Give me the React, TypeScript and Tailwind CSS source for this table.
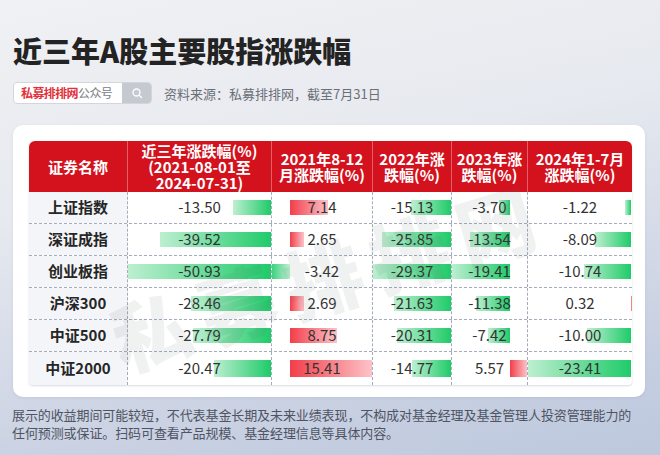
import React from "react";

type Row = [string, number, number, number, number, number];

const rows: Row[] = [
  ["上证指数", -13.5, 7.14, -15.13, -3.7, -1.22],
  ["深证成指", -39.52, 2.65, -25.85, -13.54, -8.09],
  ["创业板指", -50.93, -3.42, -29.37, -19.41, -10.74],
  ["沪深300", -28.46, 2.69, -21.63, -11.38, 0.32],
  ["中证500", -27.79, 8.75, -20.31, -7.42, -10.0],
  ["中证2000", -20.47, 15.41, -14.77, 5.57, -23.41],
];

const headers: string[][] = [
  ["证券名称"],
  ["近三年涨跌幅(%)", "(2021-08-01至", "2024-07-31)"],
  ["2021年8-12", "月涨跌幅(%)"],
  ["2022年涨", "跌幅(%)"],
  ["2023年涨", "跌幅(%)"],
  ["2024年1-7月", "涨跌幅(%)"],
];

const colStats = [1, 2, 3, 4, 5].map((c) => {
  const vals = rows.map((r) => r[c] as number);
  const mn = Math.min(0, ...vals);
  const mx = Math.max(0, ...vals);
  const span = mx - mn;
  return { span, axis: -mn / span };
});

function Bar({ v, col }: { v: number; col: number }) {
  const { span, axis } = colStats[col - 1];
  const w = (Math.abs(v) / span) * 100;
  const left = v < 0 ? (axis - Math.abs(v) / span) * 100 : axis * 100;
  let bg: string;
  if (v >= 0) {
    bg = "linear-gradient(to right, #f23e4a, #fcc3c8)";
  } else if (col === 2) {
    bg = "linear-gradient(to right, #3fd07f, #bff0d2)";
  } else {
    bg = "linear-gradient(to right, #bdefd0, #1fcb69)";
  }
  return (
    <div
      className="absolute top-[8px] bottom-[8px]"
      style={{ left: `${left}%`, width: `${w}%`, background: bg }}
    />
  );
}

function fmt(v: number) {
  return v.toFixed(2);
}

export default function App() {
  return (
    <div
      className="relative w-[660px] h-[455px] overflow-hidden bg-[linear-gradient(168deg,#f0f1f4_0%,#e6e9ef_38%,#c8d0e2_80%,#bdc8dd_100%)]"
      style={{ fontFamily: '"Noto Sans CJK SC", "Noto Sans", sans-serif' }}
    >
      <div className="pl-[13px] pt-[31px]">
        <h1 className="text-[29px] leading-[38px] font-black text-[#232323]">
          近三年A股主要股指涨跌幅
        </h1>
        <div className="mt-[13px] flex items-center h-[22px]">
          <div className="flex h-[22px] w-[139px] rounded-[4px] overflow-hidden border border-[#d3d6dc] bg-white">
            <div className="flex-1 flex items-center pl-[7px] text-[12px] tracking-[-0.6px] leading-none">
              <span className="text-[#e2313c] font-bold">私募排排网</span>
              <span className="text-[#777b84]">公众号</span>
            </div>
            <div className="w-[29px] h-full bg-[#c5c9d0] flex items-center justify-center">
              <svg width="12" height="12" viewBox="0 0 24 24" fill="none" stroke="white" strokeWidth="2.6" strokeLinecap="round">
                <circle cx="11" cy="11" r="7" />
                <path d="M16.5 16.5L21 21" />
              </svg>
            </div>
          </div>
          <div className="ml-[12px] text-[13px] text-[#6b6f78] leading-none">资料来源：私募排排网，截至7月31日</div>
        </div>
      </div>

      <div className="relative ml-[13px] mt-[21px] w-[632px] h-[272px] bg-white rounded-[10px] pl-[16px] pt-[16px] shadow-[0_1px_3px_rgba(120,130,160,0.15)]">
        <div className="w-[603px] rounded-t-[6px] rounded-b-[4px] shadow-[0_1px_2px_rgba(100,110,140,0.25)] overflow-hidden">
          <div className="grid grid-cols-[99px_144px_101px_79px_76px_104px] h-[51px] bg-[#d3121e] text-white font-bold text-[15px] leading-[16px]">
            {headers.map((h, i) => (
              <div
                key={i}
                className={`flex flex-col items-center justify-center text-center ${i < 5 ? "border-r border-[#e2606a]" : ""}`}
              >
                {h.map((l, j) => (
                  <div key={j} className="leading-[16px]">{l}</div>
                ))}
              </div>
            ))}
          </div>
          {rows.map((r, ri) => (
            <div
              key={ri}
              className={`grid grid-cols-[99px_144px_101px_79px_76px_104px] ${ri === 5 ? "h-[33px]" : "h-[32px] border-b border-dashed border-[#a3abbd]"}`}
            >
              <div className="flex items-center justify-center bg-[#f3f5f9] border-r border-dashed border-[#a3abbd] text-[15px] font-bold text-[#262626]">
                {r[0]}
              </div>
              {[1, 2, 3, 4, 5].map((c) => (
                <div
                  key={c}
                  className={`relative flex items-center justify-center text-[15px] text-[#333] ${c < 5 ? "border-r border-dashed border-[#a3abbd]" : ""}`}
                >
                  <Bar v={r[c] as number} col={c} />
                  <span className="relative">{fmt(r[c] as number)}</span>
                </div>
              ))}
            </div>
          ))}
        </div>
        <div className="pointer-events-none absolute left-[90px] top-[110px] rotate-[-17deg] text-[78px] font-black leading-none tracking-[12px] text-[rgba(90,95,105,0.09)] whitespace-nowrap">
          私募排排网
        </div>
      </div>

      <div className="pl-[12px] mt-[9px] text-[13px] leading-[18px] text-[#4f5462] tracking-[-0.1px]">
        <div>展示的收益期间可能较短，不代表基金长期及未来业绩表现，不构成对基金经理及基金管理人投资管理能力的</div>
        <div>任何预测或保证。扫码可查看产品规模、基金经理信息等具体内容。</div>
      </div>
    </div>
  );
}
